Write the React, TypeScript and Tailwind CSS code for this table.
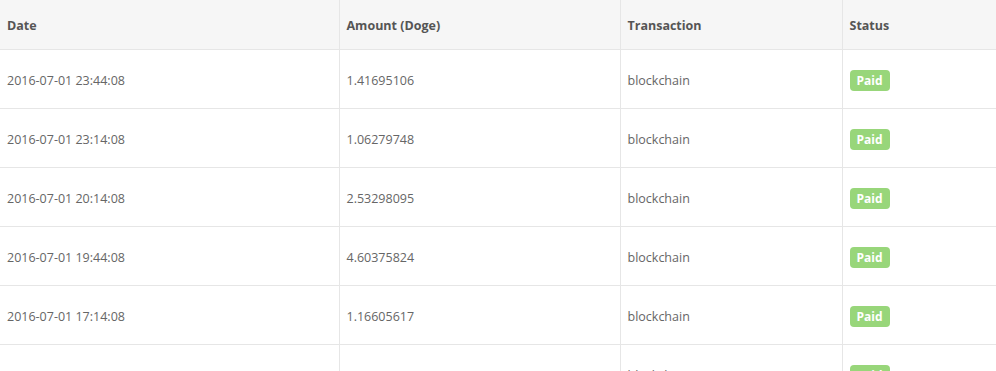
const rows = [
  { date: "2016-07-01 23:44:08", amount: "1.41695106" },
  { date: "2016-07-01 23:14:08", amount: "1.06279748" },
  { date: "2016-07-01 20:14:08", amount: "2.53298095" },
  { date: "2016-07-01 19:44:08", amount: "4.60375824" },
  { date: "2016-07-01 17:14:08", amount: "1.16605617" },
  { date: "2016-07-01 16:44:08", amount: "3.29150840" },
];

export default function App() {
  return (
    <div className="h-[371px] w-[996px] overflow-hidden bg-white font-['Open_Sans',sans-serif] text-[12.5px] text-[#666]">
      <table className="w-[997px] table-fixed border-collapse">
        <colgroup>
          <col className="w-[339px]" />
          <col className="w-[281px]" />
          <col className="w-[222px]" />
          <col />
        </colgroup>
        <thead>
          <tr className="h-[49px] bg-[#f6f6f6] text-left">
            <th className="border border-t-0 border-l-0 border-[#e6e6e6] px-[7px] pt-[4px] font-bold text-[#555]">Date</th>
            <th className="border border-t-0 border-[#e6e6e6] px-[7px] pt-[4px] font-bold text-[#555]">Amount (Doge)</th>
            <th className="border border-t-0 border-[#e6e6e6] px-[7px] pt-[4px] font-bold text-[#555]">Transaction</th>
            <th className="border border-t-0 border-[#e6e6e6] px-[7px] pt-[4px] font-bold text-[#555]">Status</th>
          </tr>
        </thead>
        <tbody>
          {rows.map((r) => (
            <tr key={r.date} className="h-[59px]">
              <td className="border border-l-0 border-[#e6e6e6] px-[7px] pt-[5px]">{r.date}</td>
              <td className="border border-[#e6e6e6] px-[7px] pt-[5px]">{r.amount}</td>
              <td className="border border-[#e6e6e6] px-[7px] pt-[5px]">blockchain</td>
              <td className="border border-[#e6e6e6] px-[7px] pt-[3px]">
                <span className="inline-block rounded-[4px] bg-[#98d67a] px-[7px] py-[2px] text-[12px] font-bold leading-[17px] text-white">
                  Paid
                </span>
              </td>
            </tr>
          ))}
        </tbody>
      </table>
    </div>
  );
}
